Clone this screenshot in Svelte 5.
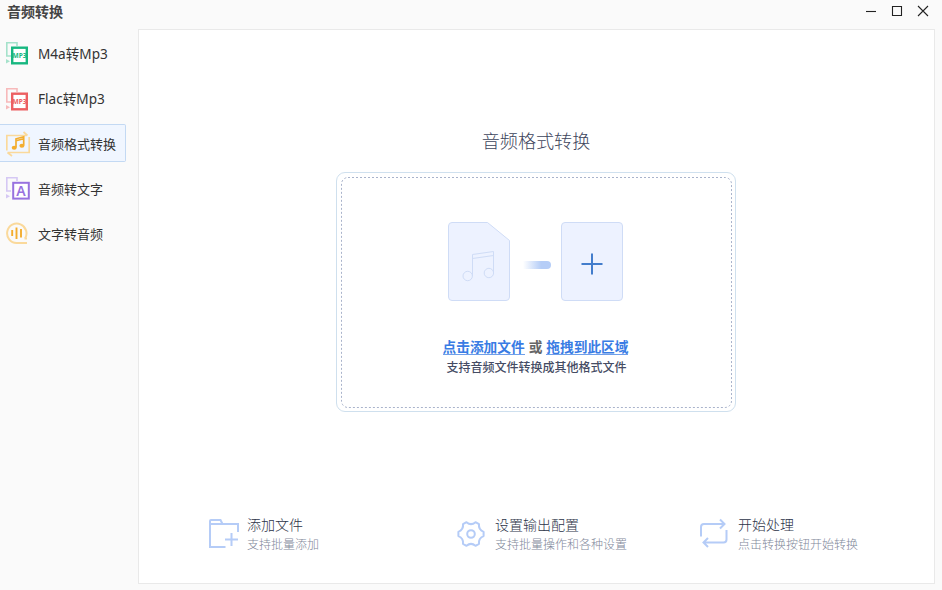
<script>
  let selected = $state('format');

  const tools = [
    { id: 'm4a', label: 'M4a转Mp3' },
    { id: 'flac', label: 'Flac转Mp3' },
    { id: 'format', label: '音频格式转换' },
    { id: 'speech', label: '音频转文字' },
    { id: 'tts', label: '文字转音频' }
  ];

  const steps = [
    { id: 'add', title: '添加文件', note: '支持批量添加' },
    { id: 'config', title: '设置输出配置', note: '支持批量操作和各种设置' },
    { id: 'start', title: '开始处理', note: '点击转换按钮开始转换' }
  ];
</script>

{#snippet toolIcon(id)}
  <svg class="tool-icon {id}" viewBox="0 0 26 28" width="26" height="28" fill="none">
    {#if id === 'm4a' || id === 'flac'}
      {@const dark = id === 'm4a' ? '#17b780' : '#ec5f61'}
      {@const light = id === 'm4a' ? '#a5e2cb' : '#f7b9ba'}
      <path d="M5 15H.8V1.8H11V5" stroke={light} stroke-width="1.6" />
      <path d="M0 18l4 2.2-4 2.4z" fill={light} />
      <rect x="6.2" y="6.7" width="14.6" height="15.6" stroke={dark} stroke-width="2.4" fill="#fff" />
      <text x="13.5" y="17.3" text-anchor="middle" textLength="14" lengthAdjust="spacingAndGlyphs" font-size="7" font-weight="700" fill={dark}>MP3</text>
    {:else if id === 'format'}
      <path d="M.8 20.500V5.500H20.500M17.500 2l4 3.500M23.200 7V22.500H1.500M1.500 22.500l4.500 3.500" stroke="#fad99b" stroke-width="1.7" />
      <path d="M10 17.500V8.800L17.700 6.800V15.500M10 10.800L17.700 8.800" stroke="#f3ad2e" stroke-width="1.7" />
      <ellipse cx="8.2" cy="17.800" rx="2.500" ry="2" fill="#f3ad2e" />
      <ellipse cx="15.900" cy="15.700" rx="2.500" ry="2" fill="#f3ad2e" />
    {:else if id === 'speech'}
      <path d="M5 15H.8V1.8H11V5" stroke="#d5c8f4" stroke-width="1.6" />
      <path d="M0 18l4 2.2-4 2.4z" fill="#d5c8f4" />
      <rect x="7.2" y="6.8" width="15.600" height="15.800" stroke="#9872df" stroke-width="2" fill="#fff" />
      <text x="15" y="19.700" text-anchor="middle" font-size="14" font-weight="600" fill="#9872df">A</text>
    {:else}
      <path d="M19 18.500A9.700 9.700 0 1 0 10.500 23H21M18.500 18.500H21" stroke="#fad99b" stroke-width="2" />
      <path d="M6.200 10v6M10.500 7.500v11.500M15 9v8.500" stroke="#f3ad2e" stroke-width="1.9" />
    {/if}
  </svg>
{/snippet}

{#snippet stepIcon(id)}
  <svg class="step-icon" viewBox="0 0 32 32" width="32" height="32" fill="none" stroke="#b5ccf7" stroke-width="2">
    {#if id === 'add'}
      <path d="M17.500 29H2V3Q2 2 3 2H12.500L14.500 6H30V14M2 6H14.500M23.500 15V28M17 21.500H30" />
    {:else if id === 'config'}
      <path d="M11.500 4.200Q16 8 20.500 4.200L24 6.200Q23.300 11.800 28.600 13.900V18.100Q23.300 20.200 24 25.800L20.500 27.800Q16 24 11.500 27.800L8 25.800Q8.700 20.200 3.400 18.100V13.900Q8.700 11.800 8 6.200Z" stroke-linejoin="round" />
      <circle cx="16" cy="16" r="3.8" />
    {:else}
      <path d="M3 18.500V9Q3 6 6 6H26.500M22 1.500L26.500 6L22 10.500M28.500 12V21.500Q28.500 24.500 25.500 24.500H5.500M10 20L5.500 24.500L10 29" />
    {/if}
  </svg>
{/snippet}

<div class="window">
  <header>
    <span class="app-title">音频转换</span>
    <div class="controls">
      <svg viewBox="0 0 12 12" width="12" height="12"><path d="M1 6.500h10" /></svg>
      <svg viewBox="0 0 12 12" width="12" height="12"><path d="M1.500 1.500h9v9h-9z" /></svg>
      <svg viewBox="0 0 12 12" width="12" height="12"><path d="M1 1l10 10M11 1L1 11" /></svg>
    </div>
  </header>

  <div class="body">
    <nav>
      {#each tools as tool (tool.id)}
        <button class="tool" class:active={selected === tool.id} onclick={() => (selected = tool.id)}>
          {@render toolIcon(tool.id)}
          <span class:mixed={tool.label.includes('Mp3')}>{tool.label}</span>
        </button>
      {/each}
    </nav>

    <main>
      <h1>音频格式转换</h1>
      <section class="dropzone">
        <svg class="outline" viewBox="0 0 398 238" width="398" height="238" fill="none">
          <rect x="4.500" y="4.500" width="390" height="230" rx="6.500" stroke="#a9b3cb" stroke-dasharray="2 2" />
        </svg>
        <div class="art">
          <svg viewBox="0 0 62 79" width="62" height="79" fill="none" stroke="#cfdcf6">
            <path d="M4 .5H39.500L61.500 18.500V75Q61.500 78.500 58 78.500H4Q.5 78.500 .5 75V4Q.5 .5 4 .5Z" fill="#edf2ff" />
            <path d="M24.500 54V32.500L45.500 29.500V51M24.500 36.500L45.500 33.500" />
            <circle cx="19.700" cy="54" r="4.700" />
            <circle cx="40.900" cy="51" r="4.700" />
          </svg>
          <div class="dash"></div>
          <div class="add-card">
            <svg viewBox="0 0 22 22" width="22" height="22"><path d="M11 .5v21M.5 11h21" stroke="#437dcc" stroke-width="2" /></svg>
          </div>
        </div>
        <p class="prompt"><span class="link">点击添加文件</span><span>或</span><span class="link">拖拽到此区域</span></p>
        <p class="hint">支持音频文件转换成其他格式文件</p>
      </section>

      <footer>
        {#each steps as step (step.id)}
          <div class="step {step.id}">
            {@render stepIcon(step.id)}
            <div>
              <div class="step-title">{step.title}</div>
              <div class="step-note">{step.note}</div>
            </div>
          </div>
        {/each}
      </footer>
    </main>
  </div>
</div>

<style>
  .window {
    box-sizing: border-box;
    display: flex;
    flex-direction: column;
    width: 942px;
    height: 590px;
    background: #fafafa;
    color: #333;
    font-family: 'Noto Sans', 'Noto Sans CJK SC', sans-serif;
    overflow: hidden;
  }

  header {
    display: flex;
    justify-content: space-between;
    height: 29px;
    padding: 0 13px 0 7px;
    box-sizing: border-box;
  }

  .app-title {
    font: 600 14px/22px 'Noto Sans CJK SC', sans-serif;
    color: #444;
  }

  .controls {
    display: flex;
    gap: 14px;
    padding-top: 5px;
  }

  .controls svg {
    fill: none;
    stroke: #222;
    stroke-width: 1.1;
  }

  .body {
    display: flex;
    flex: 1;
    min-height: 0;
  }

  nav {
    display: flex;
    flex-direction: column;
    gap: 7px;
    width: 138px;
    padding-top: 5px;
    box-sizing: border-box;
  }

  .tool {
    display: flex;
    align-items: center;
    gap: 6px;
    box-sizing: border-box;
    width: 126px;
    height: 38px;
    padding: 1px 0 0 6px;
    border: 1px solid transparent;
    border-left: 0;
    background: none;
    color: #333;
    font: 400 13px/20px 'Noto Sans', 'Noto Sans CJK SC', sans-serif;
    white-space: nowrap;
    text-align: left;
  }

  .tool.active {
    border-color: #c3d9f3;
    border-radius: 0 2px 2px 0;
    background: #f0f6ff;
  }

  .mixed {
    padding-top: 1px;
    font-size: 13.6px;
  }

  .tool-icon {
    flex: none;
    margin-top: 1px;
  }

  .m4a,
  .flac,
  .speech {
    margin-top: 3px;
  }

  .flac {
    margin-top: 5px;
  }

  main {
    display: flex;
    flex-direction: column;
    align-items: center;
    box-sizing: border-box;
    width: 797px;
    height: 555px;
    padding-right: 1px;
    border: 1px solid #e9e9e9;
    background: #fff;
  }

  h1 {
    margin: 96px 0 0;
    color: #3d455c;
    font: 300 18.1px/28px 'Noto Sans CJK SC', sans-serif;
  }

  .dropzone {
    position: relative;
    display: flex;
    flex-direction: column;
    align-items: center;
    box-sizing: border-box;
    width: 400px;
    height: 240px;
    margin-top: 18px;
    padding-right: 1px;
    border: 1px solid #cfe0ee;
    border-radius: 9px;
  }

  .outline {
    position: absolute;
    inset: 0;
    pointer-events: none;
  }

  .art {
    display: flex;
    align-items: center;
    margin-top: 49px;
  }

  .dash {
    width: 28px;
    height: 8px;
    margin: 7px 10px 0 13px;
    border-radius: 0 4px 4px 0;
    background: linear-gradient(90deg, #fff, #b5cdf7 65%);
  }

  .add-card {
    display: flex;
    align-items: center;
    justify-content: center;
    box-sizing: border-box;
    width: 62px;
    height: 79px;
    padding-top: 5px;
    border: 1px solid #cfdcf6;
    border-radius: 4px;
    background: #edf2ff;
  }

  .prompt {
    display: flex;
    gap: 4px;
    margin: 36px 0 0;
    color: #666;
    font: 700 13.7px/18px 'Noto Sans CJK SC', sans-serif;
  }

  .link {
    height: 17px;
    border-bottom: 1px solid #6f9fea;
    color: #397ce4;
  }

  .hint {
    margin: 3px 0 0;
    padding-left: 2px;
    color: #454c64;
    font: 500 12px/18px 'Noto Sans CJK SC', sans-serif;
  }

  footer {
    display: flex;
    width: 100%;
    margin-top: 101px;
    padding-left: 69px;
    box-sizing: border-box;
  }

  .step {
    display: flex;
    flex: none;
    gap: 7px;
    width: 247px;
    padding-top: 2px;
    box-sizing: border-box;
    font-family: 'Noto Sans CJK SC', sans-serif;
    white-space: nowrap;
  }

  .step.config {
    gap: 8px;
    width: 243px;
  }

  .step.start {
    gap: 8px;
  }

  .step-icon {
    flex: none;
    margin-top: 3px;
  }

  .step-title {
    color: #2c3348;
    font-size: 14px;
    line-height: 19px;
    font-weight: 300;
  }

  .step-note {
    color: #81889a;
    font-size: 12px;
    line-height: 19px;
    font-weight: 300;
  }
</style>
